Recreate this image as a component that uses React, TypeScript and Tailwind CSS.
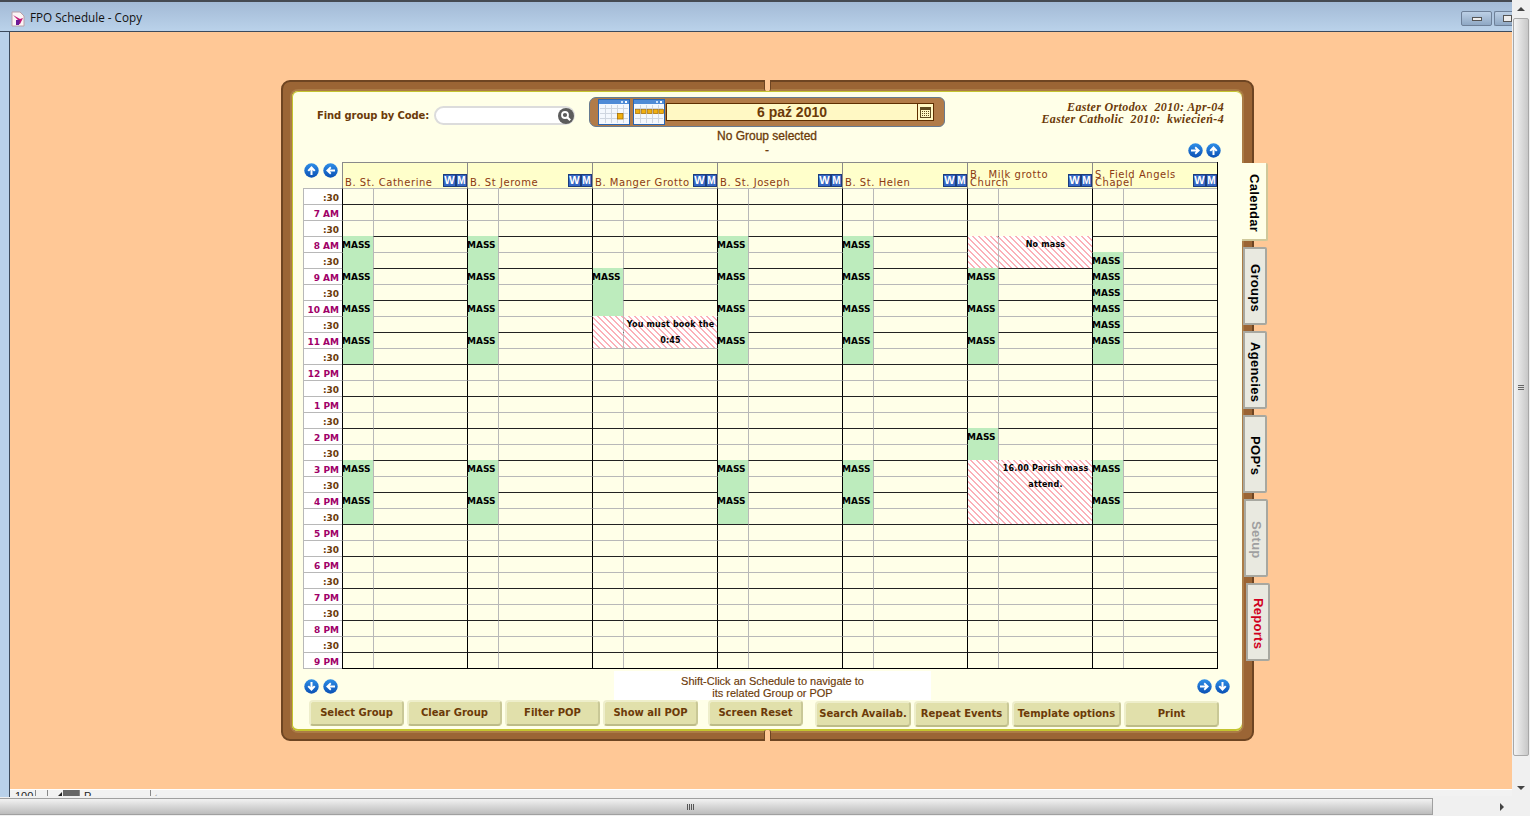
import React from "react";

const VERDANA = "font-['DejaVu_Sans','Liberation_Sans',sans-serif]";

type Block = { kind: "mass" | "hatch"; row: number; span: number; text?: string[] };

const mass = (row: number, span = 2): Block => ({ kind: "mass", row, span });
const standard = [mass(3), mass(5), mass(7), mass(9), mass(17), mass(19)];

const days: { lines: string[]; blocks: Block[] }[] = [
  { lines: ["B. St. Catherine"], blocks: standard },
  { lines: ["B. St Jerome"], blocks: standard },
  {
    lines: ["B. Manger Grotto"],
    blocks: [mass(5, 3), { kind: "hatch", row: 8, span: 2, text: ["You must book the", "0:45"] }],
  },
  { lines: ["B. St. Joseph"], blocks: standard },
  { lines: ["B. St. Helen"], blocks: standard },
  {
    lines: ["B.  Milk grotto", "Church"],
    blocks: [
      { kind: "hatch", row: 3, span: 2, text: ["No mass"] },
      mass(5), mass(7), mass(9), mass(15),
      { kind: "hatch", row: 17, span: 4, text: ["16.00 Parish mass", "attend."] },
    ],
  },
  {
    lines: ["S. Field Angels", "Chapel"],
    blocks: [mass(4, 1), mass(5, 1), mass(6, 1), mass(7, 1), mass(8, 1), mass(9), mass(17), mass(19)],
  },
];

const times = [":30"];
for (const h of ["7 AM", "8 AM", "9 AM", "10 AM", "11 AM", "12 PM", "1 PM", "2 PM", "3 PM", "4 PM", "5 PM", "6 PM", "7 PM", "8 PM", "9 PM"]) {
  times.push(h);
  if (h !== "9 PM") times.push(":30");
}

const arrows: Record<string, string> = {
  up: "M7.5 3 L3.5 7.2 L5 8.4 L6.5 6.9 V12 H8.5 V6.9 L10 8.4 L11.5 7.2 Z",
  down: "M7.5 12 L3.5 7.8 L5 6.6 L6.5 8.1 V3 H8.5 V8.1 L10 6.6 L11.5 7.8 Z",
  left: "M3 7.5 L7.2 3.5 L8.4 5 L6.9 6.5 H12 V8.5 H6.9 L8.4 10 L7.2 11.5 Z",
  right: "M12 7.5 L7.8 3.5 L6.6 5 L8.1 6.5 H3 V8.5 H8.1 L6.6 10 L7.8 11.5 Z",
};

const NavArrow = ({ dir }: { dir: string }) => (
  <svg width="15" height="15" viewBox="0 0 15 15" className="shrink-0">
    <defs>
      <linearGradient id={"nav" + dir} x1="0" y1="0" x2="0" y2="1">
        <stop offset="0" stopColor="#2f8fe8" />
        <stop offset="1" stopColor="#0a50b4" />
      </linearGradient>
    </defs>
    <circle cx="7.5" cy="7.5" r="7.2" fill={"url(#nav" + dir + ")"} />
    <path d={arrows[dir]} fill="#fff" />
  </svg>
);

const CalIcon = ({ week }: { week?: boolean }) => (
  <svg width="32" height="26" viewBox="0 0 32 26" className="shrink-0">
    <rect x="0.5" y="0.5" width="31" height="25" fill="#f4f8fd" stroke="#2a66b4" />
    <rect x="1" y="1" width="30" height="4" fill="#4f8bd6" />
    <rect x="23" y="2" width="2" height="2" fill="#cfe2f8" />
    <rect x="27" y="2" width="2" height="2" fill="#fff" />
    <path d="M2 9.5H30M2 14.5H30M2 19.5H30M7.5 6V24M13.5 6V24M19.5 6V24M25.5 6V24" stroke="#cfd6e0" strokeWidth="1" />
    {week ? (
      <g fill="#f0b010" stroke="#a87000" strokeWidth="0.7">
        <rect x="2.5" y="10.5" width="4.5" height="4" />
        <rect x="8.5" y="10.5" width="4.5" height="4" />
        <rect x="14.5" y="10.5" width="4.5" height="4" />
        <rect x="20.5" y="10.5" width="4.5" height="4" />
        <rect x="26" y="10.5" width="4.5" height="4" />
      </g>
    ) : (
      <rect x="19.5" y="14.5" width="5.5" height="5.5" fill="#f0b010" stroke="#a87000" strokeWidth="0.8" />
    )}
  </svg>
);

const Tab = ({ label, cls, text }: { label: string; cls: string; text: string }) => (
  <div className={"flex h-[78px] items-center justify-center rounded-r-[2px] pt-[4px] [writing-mode:vertical-rl] " + cls}>
    <span className={"font-['Liberation_Sans',sans-serif] text-[13px] leading-none font-bold tracking-[0.3px] " + text}>{label}</span>
  </div>
);

const Btn = ({ label, w }: { label: string; w: string }) => (
  <div className={"flex h-[26px] items-center justify-center rounded-[4px] border-2 border-t-[#eeeecb] border-r-[#c9c896] border-b-[#bdbc88] border-l-[#eeeecb] bg-[#e1e0ab] pb-[2px] text-[10px] font-bold whitespace-nowrap text-[#6b3a08] " + VERDANA + " " + w}>
    {label}
  </div>
);

const DayColumn = ({ lines, blocks }: { lines: string[]; blocks: Block[] }) => (
  <div className="w-[125px] shrink-0">
    <div className="flex h-[26px] items-end border-t border-l border-[#8a8a8a] bg-[#ffffcb] pr-0 pb-px">
      <div className={"min-w-0 flex-1 pl-[2px] text-[10px] leading-[8px] tracking-[0.55px] whitespace-pre text-[#8c3a12] " + VERDANA}>
        {lines.map((l) => (
          <div key={l} className="h-[8px]">{l}</div>
        ))}
      </div>
      <div className="flex">
        <div className="flex h-[13px] w-[13px] items-center justify-center border border-[#1c3c7c] bg-[#3668c4] font-['Liberation_Sans',sans-serif] text-[11px] leading-none font-bold text-white">W</div>
        <div className="flex h-[13px] w-[11px] items-center justify-center border border-[#1c3c7c] bg-[#3668c4] font-['Liberation_Sans',sans-serif] text-[10px] leading-none font-bold text-white">M</div>
      </div>
    </div>
    <div className="grid grid-cols-[31px_94px] grid-rows-[repeat(30,16px)]">
      {times.map((t, i) => {
        const line = t === ":30" ? "border-[#b8b8b8]" : "border-[#222222]";
        return (
          <React.Fragment key={i}>
            <div className={"relative border-t border-l border-l-black " + line} style={{ gridRow: i + 1, gridColumn: 1 }} />
            <div className={"border-t border-l border-l-[#b8b8b8] " + line} style={{ gridRow: i + 1, gridColumn: 2 }} />
          </React.Fragment>
        );
      })}
      {blocks.map((b, i) =>
        b.kind === "mass" ? (
          <div
            key={i}
            className={"z-10 ml-px bg-[#bdecbd] indent-[-1px] text-[9px] leading-[18px] font-bold text-black " + VERDANA}
            style={{ gridRow: `${b.row + 1} / span ${b.span}`, gridColumn: 1 }}
          >
            MASS
          </div>
        ) : (
          <React.Fragment key={i}>
            <div
              className="z-10 ml-px bg-[repeating-linear-gradient(45deg,#fbb0b8_0,#fbb0b8_1px,#ffffff_1px,#ffffff_4.2426px)]"
              style={{ gridRow: `${b.row + 1} / span ${b.span}`, gridColumn: 1 }}
            />
            <div
              className={"z-10 ml-px bg-[repeating-linear-gradient(45deg,#fbb0b8_0,#fbb0b8_1px,#ffffff_1px,#ffffff_4.2426px)] pt-px text-center text-[8px] leading-[16px] font-bold tracking-[0.2px] whitespace-nowrap text-black " + VERDANA}
              style={{ gridRow: `${b.row + 1} / span ${b.span}`, gridColumn: 2 }}
            >
              {b.text?.map((t) => <div key={t}>{t}</div>)}
            </div>
          </React.Fragment>
        ),
      )}
    </div>
  </div>
);

export default function App() {
  return (
    <div className="flex h-[816px] w-[1530px] flex-col overflow-hidden bg-[#f0f0f0]">
      <div className="flex h-[797px]">
        {/* window */}
        <div className="flex w-[1512px] flex-col">
          <div className="flex h-[32px] shrink-0 items-center border-t-2 border-b border-t-[#454a52] border-b-[#3c4a5c] bg-gradient-to-b from-[#a3bad6] to-[#bad2ea] pt-[3px] pl-[11px]">
            <svg width="14" height="16" viewBox="0 0 14 16" className="mt-px shrink-0">
              <path d="M1 1H9L13 5V15H1Z" fill="#fbf4f4" stroke="#b8a0a8" />
              <path d="M2 4 L9 8 L12 7 L9 13 H5 L7 9 Z" fill="#c01878" />
              <path d="M5 9 L9 9 L8 14 H5 Z" fill="#6a1a98" />
            </svg>
            <span className="ml-[5px] font-['Open_Sans',sans-serif] text-[11.7px] text-[#111]">FPO Schedule - Copy</span>
            <div className="ml-auto flex gap-[2px] self-start pt-[6px]">
              <div className="flex h-[15px] w-[31px] items-center justify-center rounded-[2px] border border-[#6e8098] bg-gradient-to-b from-[#bcd0e6] to-[#8fa8c4]">
                <div className="h-[4px] w-[10px] border border-[#555] bg-[#eee]" />
              </div>
              <div className="flex h-[15px] w-[18px] items-center justify-end rounded-l-[2px] border border-r-0 border-[#6e8098] bg-gradient-to-b from-[#bcd0e6] to-[#8fa8c4] pl-[8px]">
                <div className="h-[7px] w-[9px] border border-[#555] bg-[#eee]" />
              </div>
            </div>
          </div>
          <div className="flex min-h-0 flex-1">
            <div className="w-[10px] shrink-0 border-r border-[#3c4a5c] bg-[#b9d1ea]" />
            <div className="flex min-w-0 flex-1 flex-col">
              <div className="flex h-[758px] shrink-0 items-start border-b border-white bg-[#ffc896] pt-[48px] pl-[271px]">
                {/* frame */}
                <div className="relative z-10 h-[661px] w-[973px] shrink-0 rounded-[9px] border-2 border-[#6e4522] bg-[#9b6535] pt-[9px] pr-[10px] pb-[8px] pl-[9px]">
                  <div className="absolute -top-[2px] left-[481px] z-10 h-[11px] w-[7px] rounded-b-[2px] border-x border-[#6e4522] bg-[#ffc896]" />
                  <div className="absolute -bottom-[2px] left-[481px] z-10 h-[11px] w-[7px] rounded-t-[2px] border-x border-[#6e4522] bg-[#ffc896]" />
                  <div className="flex h-[640px] w-[950px] flex-col rounded-[6px] bg-[#ffffe8] shadow-[inset_1px_0_0_#c4c430,inset_0_1px_0_#c4c430,inset_0_-2px_0_#c4c430,0_0_0_2px_#ab7c46]">
                    {/* top row */}
                    <div className="mt-[6px] flex h-[30px] shrink-0 items-start pl-[25px]">
                      <div className={"mt-[13px] w-[117px] text-[10px] leading-[12px] font-bold tracking-[-0.1px] whitespace-nowrap text-[#6b3a08] " + VERDANA}>Find group by Code:</div>
                      <div className="mt-[9px] flex h-[19px] w-[141px] items-center justify-end rounded-full border-2 border-[#dcdcdc] bg-white">
                        <svg width="16" height="16" viewBox="0 0 16 16" className="-mr-px">
                          <circle cx="8" cy="8" r="8" fill="#5c5c5c" />
                          <circle cx="7" cy="7" r="3" fill="none" stroke="#fff" strokeWidth="1.8" />
                          <path d="M9.2 9.2 L12.2 12.2" stroke="#fff" strokeWidth="2.2" />
                        </svg>
                      </div>
                      <div className="ml-[14px] flex h-[30px] w-[356px] items-center rounded-[7px] rounded-r-[6px] border border-[#667a90] bg-[#b17b48] pl-[8px]">
                        <CalIcon />
                        <div className="w-[3px]" />
                        <CalIcon week />
                        <div className="ml-px flex h-[18px] w-[268px] border border-[#5e2e00] bg-[#fff8c4]">
                          <div className="flex-1 text-center font-['Liberation_Sans',sans-serif] text-[14px] leading-[17px] font-bold text-[#6b3a08]">6 paź 2010</div>
                          <div className="flex w-[16px] items-center justify-center border-l border-[#5e2e00]">
                            <svg width="11" height="11" viewBox="0 0 11 11">
                              <rect x="0.5" y="0.5" width="10" height="10" fill="#fff8c4" stroke="#5e4a20" />
                              <rect x="1" y="1" width="9" height="2" fill="#5e4a20" />
                              <path d="M2 4.5H9M2 6.5H9M2 8.5H9" stroke="#5e4a20" strokeDasharray="1 1" />
                            </svg>
                          </div>
                        </div>
                      </div>
                      <div className="ml-auto pt-[4px] pr-[18px] text-right font-['Liberation_Serif',serif] text-[12px] leading-[12px] font-bold tracking-[0.36px] whitespace-pre text-[#6b3a08] italic">
                        <div>Easter Ortodox  2010: Apr-04</div>
                        <div>Easter Catholic  2010:  kwiecień-4</div>
                      </div>
                    </div>
                    {/* selected group */}
                    <div className="grid h-[35px] shrink-0 grid-cols-[1fr_auto_1fr]">
                      <div />
                      <div className="pt-[2px] text-center font-['Liberation_Sans',sans-serif] text-[12px] leading-[14px] text-[#6b3a08] [-webkit-text-stroke:0.3px_#6b3a08]">
                        <div>No Group selected</div>
                        <div>-</div>
                      </div>
                      <div className="flex justify-end gap-[3px] pt-[16px] pr-[21px]">
                        <NavArrow dir="right" />
                        <NavArrow dir="up" />
                      </div>
                    </div>
                    {/* schedule */}
                    <div className="flex shrink-0 pl-[11px]">
                      <div className="w-[39px] shrink-0">
                        <div className="flex h-[26px] gap-[4px] pt-px pl-px">
                          <NavArrow dir="up" />
                          <NavArrow dir="left" />
                        </div>
                        <div className="border-b border-[#b8b8b8] bg-white">
                          {times.map((t, i) => (
                            <div
                              key={i}
                              className={
                                "h-[16px] border-t border-l border-[#b8b8b8] pr-[3px] text-right text-[9px] leading-[18px] font-bold " +
                                VERDANA +
                                (t === ":30" ? " text-[#6b3a08]" : " text-[#a00068]")
                              }
                            >
                              {t}
                            </div>
                          ))}
                        </div>
                      </div>
                      <div className="flex border-r border-b border-r-black border-b-black">
                        {days.map((d) => (
                          <DayColumn key={d.lines[0]} lines={d.lines} blocks={d.blocks} />
                        ))}
                      </div>
                    </div>
                    {/* hint row */}
                    <div className="flex h-[31px] shrink-0 pl-[12px]">
                      <div className="flex gap-[4px] pt-[10px]">
                        <NavArrow dir="down" />
                        <NavArrow dir="left" />
                      </div>
                      <div className="mt-[2px] ml-[276px] flex h-[29px] w-[317px] flex-col items-center bg-white pt-[4px] font-['Liberation_Sans',sans-serif] text-[11px] leading-[12px] text-[#6b3a08] [-webkit-text-stroke:0.15px_#6b3a08]">
                        <div>Shift-Click an Schedule to navigate to</div>
                        <div>its related Group or POP</div>
                      </div>
                      <div className="ml-auto flex gap-[3px] pt-[10px] pr-[12px]">
                        <NavArrow dir="right" />
                        <NavArrow dir="down" />
                      </div>
                    </div>
                    {/* buttons */}
                    <div className="flex items-start pl-[17px]">
                      <div className="flex gap-[3px]">
                        <Btn label="Select Group" w="w-[95px]" />
                        <Btn label="Clear Group" w="w-[95px]" />
                        <Btn label="Filter POP" w="w-[95px]" />
                        <Btn label="Show all POP" w="w-[95px]" />
                      </div>
                      <div className="ml-[10px]"><Btn label="Screen Reset" w="w-[95px]" /></div>
                      <div className="mt-px ml-[12px] flex gap-[3px]">
                        <Btn label="Search Availab." w="w-[96px]" />
                        <Btn label="Repeat Events" w="w-[95px]" />
                        <Btn label="Template options" w="w-[109px]" />
                        <Btn label="Print" w="w-[95px]" />
                      </div>
                    </div>
                  </div>
                </div>
                {/* tabs */}
                <div className="relative z-20 -ml-[12px] flex w-[28px] shrink-0 flex-col gap-[6px] pt-[83px]">
                  <Tab label="Calendar" cls="w-[26px] border-r-2 border-b-2 border-[#cfc89a] bg-[#ffffe8]" text="text-black" />
                  <Tab label="Groups" cls="ml-px w-[24px] border-2 border-[#a8a8a0] bg-[#e9e9e0]" text="text-black" />
                  <Tab label="Agencies" cls="ml-px w-[24px] border-2 border-[#a8a8a0] bg-[#e9e9e0]" text="text-black" />
                  <Tab label="POP's" cls="ml-px w-[24px] border-2 border-[#a8a8a0] bg-[#e9e9e0]" text="text-black" />
                  <Tab label="Setup" cls="ml-[2px] w-[24px] border-2 border-[#a8a8a0] bg-[#e9e9e0]" text="text-[#a0a0a0]" />
                  <Tab label="Reports" cls="ml-[4px] w-[24px] border-2 border-[#a8a8a0] bg-[#e9e9e0]" text="text-[#d00020]" />
                </div>
              </div>
              {/* clipped status strip */}
              <div className="flex h-[6px] overflow-hidden bg-[#f2f2f2] font-['Liberation_Sans',sans-serif] text-[11px] leading-[12px] text-[#222]">
                <div className="w-[25px] pl-[5px]">100</div>
                <div className="w-[12px] border-l border-[#888]" />
                <div className="flex w-[16px] items-end justify-end border-l border-[#888] pr-px">
                  <div className="h-0 w-0 border-b-[4px] border-l-[4px] border-b-[#222] border-l-transparent" />
                </div>
                <div className="h-[6px] w-[16px] bg-[#666]" />
                <div className="w-[71px] border-l border-[#888] pl-[4px]">P</div>
                <div className="border-l border-[#888] pl-[3px] text-[#999]">‹</div>
              </div>
            </div>
          </div>
        </div>
        {/* vertical scrollbar */}
        <div className="flex w-[18px] shrink-0 flex-col items-center bg-[#f0f0f0]">
          <div className="flex h-[18px] items-center justify-center">
            <div className="h-0 w-0 border-x-[4px] border-b-[4px] border-x-transparent border-b-[#444]" />
          </div>
          <div className="flex h-[738px] w-[16px] flex-col items-center justify-center gap-px rounded-[2px] border border-[#a8a8a8] bg-gradient-to-r from-[#f4f4f4] to-[#c8c8c8]">
            <div className="h-px w-[6px] bg-[#666]" />
            <div className="h-px w-[6px] bg-[#666]" />
            <div className="h-px w-[6px] bg-[#666]" />
          </div>
          <div className="flex flex-1 items-end justify-center pb-[7px]">
            <div className="h-0 w-0 border-x-[4px] border-t-[4px] border-x-transparent border-t-[#444]" />
          </div>
        </div>
      </div>
      {/* horizontal scrollbar */}
      <div className="flex h-[19px] shrink-0 items-center bg-[#f0f0f0]">
        <div className="flex h-[17px] w-[1433px] items-center gap-px border border-l-0 border-[#a0a0a0] bg-gradient-to-b from-[#f2f2f2] to-[#bcbcbc] pl-[687px]">
          <div className="h-[6px] w-px bg-[#555]" />
          <div className="h-[6px] w-px bg-[#555]" />
          <div className="h-[6px] w-px bg-[#555]" />
          <div className="h-[6px] w-px bg-[#555]" />
        </div>
        <div className="ml-[67px] h-0 w-0 border-y-[4px] border-l-[4px] border-y-transparent border-l-[#444]" />
      </div>
    </div>
  );
}
